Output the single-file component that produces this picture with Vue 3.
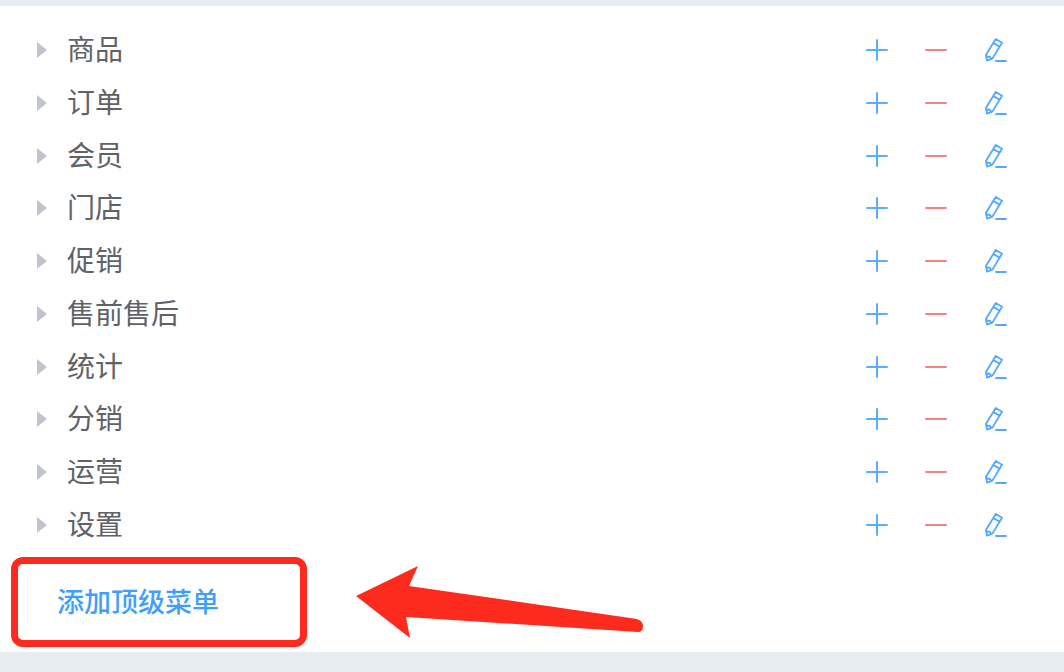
<script setup>
import { ref } from 'vue'

const menus = ref(['商品', '订单', '会员', '门店', '促销', '售前售后', '统计', '分销', '运营', '设置'])
</script>

<template>
  <main class="page">
    <section class="panel">
      <ul class="tree">
        <li v-for="name in menus" :key="name" class="node">
          <button class="toggle" type="button" :aria-label="'展开' + name">
            <svg width="10" height="16" viewBox="0 0 10 16"><path d="M0 0L10 8L0 16Z" fill="#c0c4cc" /></svg>
          </button>
          <span class="label">{{ name }}</span>
          <div class="actions">
            <button class="action add" type="button" :aria-label="'添加' + name">
              <svg width="24" height="24" viewBox="0 0 24 24"><path d="M2 12H22M12 2V22" /></svg>
            </button>
            <button class="action remove" type="button" :aria-label="'删除' + name">
              <svg width="24" height="24" viewBox="0 0 24 24"><path d="M2 12H22" /></svg>
            </button>
            <button class="action edit" type="button" :aria-label="'编辑' + name">
              <svg width="24" height="24" viewBox="0 0 24 24">
                <path d="M12.7 1L19 4.7L9.4 20.6L4 22.6L2.9 17Z M10.5 5.1L16.7 8.7M2.9 17L4.6 18.8L6.8 18.7L7.6 20.2L9.4 20.6" />
                <path d="M13 23H23" />
              </svg>
            </button>
          </div>
        </li>
      </ul>
      <div class="footer">
        <div class="frame">
          <button class="add-top" type="button">添加顶级菜单</button>
        </div>
        <svg class="arrow" width="288" height="73" viewBox="0 0 288 73" aria-hidden="true">
          <path d="M0 30L62 0L53 20L281 53Q287 55 287 60Q287 66 282 66L50 51L54 72Z" fill="#fd2b1e" />
        </svg>
      </div>
    </section>
  </main>
</template>

<style>
body {
  background: #e8edf1;
}
</style>

<style scoped>
.page {
  padding: 6px 0 20px;
  font-family: "Liberation Sans", "Noto Sans CJK SC", sans-serif;
}
.panel {
  padding-top: 18px;
  background: #fff;
}
.tree {
  display: grid;
  grid-auto-rows: 1fr;
  min-height: 527px;
  margin: 0;
  padding: 0 57px 0 36px;
  list-style: none;
}
.node {
  display: flex;
  align-items: center;
}
button {
  padding: 0;
  border: 0;
  background: none;
  font: inherit;
  cursor: pointer;
}
svg {
  display: block;
}
.toggle {
  width: 12px;
  padding-left: 1px;
}
.label {
  flex: 1;
  margin-left: 19px;
  padding-top: 2px;
  color: #606266;
  font-size: 28px;
  line-height: 40px;
}
.actions {
  display: flex;
  gap: 35px;
}
.action {
  color: #409eff;
}
.action path {
  fill: none;
  stroke: currentColor;
  stroke-width: 2;
  stroke-linecap: round;
  stroke-linejoin: round;
  stroke-opacity: 0.85;
}
.edit path {
  stroke-width: 1.8;
  stroke-opacity: 0.9;
}
.remove {
  color: #f56c6c;
}
.footer {
  display: flex;
  align-items: center;
  gap: 49px;
  padding: 6px 11px 5px;
}
.frame {
  box-sizing: border-box;
  width: 296px;
  padding: 19px 39px 17px;
  border: 7px solid #fd2b1e;
  border-radius: 12px;
}
.add-top {
  color: #409eff;
  font-size: 27px;
  font-weight: 500;
  line-height: 40px;
}
</style>
